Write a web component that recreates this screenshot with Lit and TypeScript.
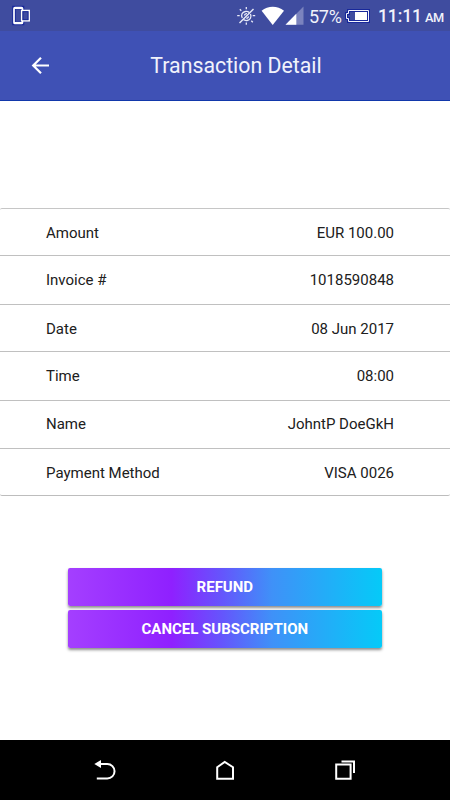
import { LitElement, html, css } from "lit";
import { customElement, property } from "lit/decorators.js";

@customElement("status-bar")
class StatusBar extends LitElement {
  static styles = css`
    :host { display: flex; height: 31px; background: #3f4c9f; color: #f1f2fa; }
    svg { display: block; flex: none; }
    .spacer { flex: 1; }
    .percent { width: 36px; margin-left: 4px; font-size: 18px; line-height: 33px; letter-spacing: -0.3px; }
    .clock { width: 47px; margin-left: 8px; font-size: 17.500px; line-height: 33px; font-weight: 500; letter-spacing: -0.1px; }
    .meridiem { width: 25px; font-size: 12.800px; line-height: 36px; font-weight: 500; letter-spacing: -0.6px; }
  `;
  render() {
    return html`
      <svg width="40" height="31" viewBox="0 0 40 31" fill="none">
        <path d="M22.500 10.500V7.500H14v16h8.500v-3" stroke="#18289a" stroke-width="3.600" />
        <rect x="14" y="7.500" width="8.500" height="16" rx="1" stroke="#fff" stroke-width="1.700" />
        <path d="M14 8h8M14 23h8" stroke="#fff" stroke-width="2.200" />
        <rect x="21.700" y="10.500" width="7.500" height="10.300" fill="#3f4c9f" stroke="#fff" stroke-width="1.500" />
        <rect x="23" y="11.700" width="5" height="8" stroke="#18289a" stroke-width="1" />
      </svg>
      <div class="spacer"></div>
      <svg width="68" height="31" viewBox="237 0 68 31" fill="none">
        <g stroke="#e8eaf8" stroke-width="1.300">
          <path d="M246.300 7v2.300M246.300 22.500v2.300M237.200 15.700h2.500M252.700 15.700h2.500M239.800 9.300l1.500 1.500M251.300 20.800l1.500 1.500" />
          <path d="M253.500 9L239.500 23" stroke-width="1.500" />
          <path d="M242.300 18c-1.600-3-.2-6 3-6.500 1.600-.3 3 .2 4 1.100M250.500 14c1.300 3-.3 6-3.400 6.500-1.400.2-2.700-.1-3.700-.9M244.500 15.500c.2-1.300 1.300-2 2.500-1.800M248.600 16.300c-.2 1.200-1.200 2-2.400 1.800" />
        </g>
        <path d="M261.600 10.800C268 5.500 277.500 5.500 284 10.800L272.700 25Z" fill="#fff" />
        <path d="M303.500 6.500V24.800H285.500Z" fill="#7b83be" />
        <path d="M296.300 13.800V24.800H285.500Z" fill="#fff" />
      </svg>
      <span class="percent">57%</span>
      <svg width="25" height="31" viewBox="345 0 25 31" fill="none">
        <path d="M348.500 10.500H368.500V21.500H348.500V18.500H346.500V13.500H348.500Z" stroke="#18289a" stroke-width="3" />
        <path d="M348.500 10.500H368.500V21.500H348.500V18.500H346.500V13.500H348.500Z" stroke="#f4f5fc" />
        <rect x="355" y="12" width="12" height="8" fill="#fff" />
      </svg>
      <span class="clock">11:11</span><span class="meridiem">AM</span>
    `;
  }
}

@customElement("title-bar")
class TitleBar extends LitElement {
  @property() heading = "";
  static styles = css`
    :host { display: flex; height: 70px; box-sizing: border-box; border-bottom: 1px solid #1238ab; background: #3f51b5; }
    .back { flex: none; width: 60px; height: 69px; }
    .heading { flex: 1; margin-right: 38px; text-align: center; font-size: 21.300px; line-height: 69px; color: #f1f2fb; }
  `;
  render() {
    return html`
      <svg class="back" viewBox="0 31 60 69" fill="none" stroke="#fff" stroke-width="2.200">
        <path d="M49 65.500H33.500M41 57.700L33.200 65.500L41 73.300" />
      </svg>
      <div class="heading">${this.heading}</div>
    `;
  }
}

@customElement("detail-list")
class DetailList extends LitElement {
  @property({ attribute: false }) rows: string[][] = [];
  static styles = css`
    :host { display: block; box-sizing: border-box; height: 288px; border-top: 1px solid #c6c6c6; border-bottom: 1px solid #bdbdbd; border-radius: 2px; }
    .list { display: grid; height: 100%; grid-template-rows: 47px 49px 47px 49px 48px 46px; }
    .row { display: flex; justify-content: space-between; box-sizing: border-box; padding: 0 56px 0 46px; border-bottom: 1px solid #c0c0c0; font-size: 15px; line-height: 49px; color: #202020; }
    .row:nth-child(5) { line-height: 47px; }
    .row:last-child { border-bottom: 0; }
  `;
  render() {
    return html`<div class="list">
      ${this.rows.map(([label, value]) => html`<div class="row"><span>${label}</span><span>${value}</span></div>`)}
    </div>`;
  }
}

@customElement("nav-bar")
class NavBar extends LitElement {
  static styles = css`
    :host { display: block; height: 60px; background: #000; }
    svg { display: block; }
  `;
  render() {
    return html`
      <svg width="450" height="60" viewBox="0 740 450 60" fill="none" stroke="#fff" stroke-width="2">
        <path d="M100 764H107.300A7.200 7.200 0 0 1 107.300 778.500H96.800" />
        <path d="M94.300 764L101 760V768Z" fill="#fff" stroke="none" />
        <path d="M217.200 778.700V767.200L224.700 762L233 767.200V778.700Z" />
        <path d="M336.200 764.500H350.600V778.700H336.200Z" />
        <path d="M341.500 761.500H354V773" />
      </svg>
    `;
  }
}

@customElement("app-root")
class AppRoot extends LitElement {
  static styles = css`
    :host { display: flex; flex-direction: column; width: 450px; height: 800px; background: #fff; font-family: Roboto, "Liberation Sans", sans-serif; }
    main { flex: 1; padding-top: 107px; }
    .actions { display: flex; flex-direction: column; gap: 4px; width: 314.500px; margin: 72px 0 0 67.600px; }
    button {
      height: 38.200px; padding: 0 0 1px; border: 0; border-radius: 2px;
      background: linear-gradient(90deg, #a43fff 0%, #8f20ff 33%, #6555fc 49%, #3f91f8 65%, #05caf8 100%);
      box-shadow: 0 2px 3px rgba(0, 0, 0, 0.450);
      color: #fff; font: 700 15px Roboto, "Liberation Sans", sans-serif;
    }
  `;
  private rows = [
    ["Amount", "EUR 100.00"],
    ["Invoice #", "1018590848"],
    ["Date", "08 Jun 2017"],
    ["Time", "08:00"],
    ["Name", "JohntP DoeGkH"],
    ["Payment Method", "VISA 0026"],
  ];
  render() {
    return html`
      <status-bar></status-bar>
      <title-bar heading="Transaction Detail"></title-bar>
      <main>
        <detail-list .rows=${this.rows}></detail-list>
        <div class="actions">
          <button>REFUND</button>
          <button>CANCEL SUBSCRIPTION</button>
        </div>
      </main>
      <nav-bar></nav-bar>
    `;
  }
}
